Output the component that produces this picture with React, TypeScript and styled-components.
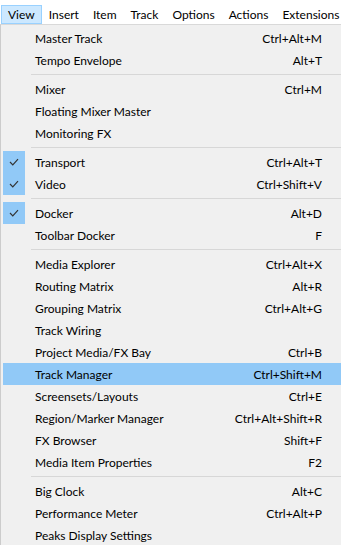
import React from 'react'
import styled, { createGlobalStyle } from 'styled-components'

const GlobalStyle = createGlobalStyle`
body {
  margin: 0;
  background: #f0f0f0;
  font-family: Lato, "Open Sans", sans-serif;
  font-size: 12px;
  color: #000000;
}
`

const Window = styled.div`
width: 341px;
height: 545px;
overflow: hidden;
display: flex;
flex-direction: column;
background: #f0f0f0;
`

const MenuBar = styled.div`
height: 24px;
background: #ffffff;
display: flex;
align-items: flex-end;
padding-left: 1px;
box-sizing: border-box;
flex-shrink: 0;
`

const BarItem = styled.div<{ $open?: boolean }>`
height: 17px;
padding: 0 6px;
display: flex;
align-items: center;
border: 1px solid ${p => (p.$open ? '#99d1ff' : 'transparent')};
background: ${p => (p.$open ? '#cce8ff' : 'transparent')};
white-space: nowrap;
`

const Dropdown = styled.div`
flex: 1;
border-left: 1px solid #cccccc;
border-top: 1px solid #d9d9d9;
padding-top: 2px;
background: #f0f0f0;
`

const Row = styled.div<{ $hot?: boolean }>`
position: relative;
height: 22px;
display: flex;
align-items: center;
padding: 0 19px 0 32px;
margin-left: 2px;
background: ${p => (p.$hot ? '#91c9f7' : 'transparent')};
white-space: nowrap;
`

const Label = styled.span`
flex: 1;
`

const Shortcut = styled.span`
text-align: right;
`

const CheckBox = styled.span`
position: absolute;
left: 0;
top: 0;
width: 22px;
height: 22px;
background: #91c9f7;
display: flex;
align-items: center;
justify-content: center;
`

const Separator = styled.div`
height: 7px;
display: flex;
align-items: center;
padding-left: 30px;

&::after {
  content: '';
  flex: 1;
  height: 1px;
  background: #d7d7d7;
}
`

type Item = { label: string; key?: string; checked?: boolean; hot?: boolean } | 'sep'

const items: Item[] = [
  { label: 'Master Track', key: 'Ctrl+Alt+M' },
  { label: 'Tempo Envelope', key: 'Alt+T' },
  'sep',
  { label: 'Mixer', key: 'Ctrl+M' },
  { label: 'Floating Mixer Master' },
  { label: 'Monitoring FX' },
  'sep',
  { label: 'Transport', key: 'Ctrl+Alt+T', checked: true },
  { label: 'Video', key: 'Ctrl+Shift+V', checked: true },
  'sep',
  { label: 'Docker', key: 'Alt+D', checked: true },
  { label: 'Toolbar Docker', key: 'F' },
  'sep',
  { label: 'Media Explorer', key: 'Ctrl+Alt+X' },
  { label: 'Routing Matrix', key: 'Alt+R' },
  { label: 'Grouping Matrix', key: 'Ctrl+Alt+G' },
  { label: 'Track Wiring' },
  { label: 'Project Media/FX Bay', key: 'Ctrl+B' },
  { label: 'Track Manager', key: 'Ctrl+Shift+M', hot: true },
  { label: 'Screensets/Layouts', key: 'Ctrl+E' },
  { label: 'Region/Marker Manager', key: 'Ctrl+Alt+Shift+R' },
  { label: 'FX Browser', key: 'Shift+F' },
  { label: 'Media Item Properties', key: 'F2' },
  'sep',
  { label: 'Big Clock', key: 'Alt+C' },
  { label: 'Performance Meter', key: 'Ctrl+Alt+P' },
  { label: 'Peaks Display Settings' },
]

const menus = ['View', 'Insert', 'Item', 'Track', 'Options', 'Actions', 'Extensions']

function Check() {
  return (
    <svg width="10" height="8" viewBox="0 0 10 8">
      <path d="M1 4 L3.8 6.8 L9 1.2" fill="none" stroke="#333333" strokeWidth="1.2" />
    </svg>
  )
}

export default function App(): JSX.Element {
  return (
    <Window>
      <GlobalStyle />
      <MenuBar>
        {menus.map(m => (
          <BarItem key={m} $open={m === 'View'}>{m}</BarItem>
        ))}
      </MenuBar>
      <Dropdown>
        {items.map((it, i) =>
          it === 'sep' ? (
            <Separator key={i} />
          ) : (
            <Row key={i} $hot={it.hot}>
              {it.checked && (
                <CheckBox>
                  <Check />
                </CheckBox>
              )}
              <Label>{it.label}</Label>
              {it.key && <Shortcut>{it.key}</Shortcut>}
            </Row>
          )
        )}
      </Dropdown>
    </Window>
  )
}
